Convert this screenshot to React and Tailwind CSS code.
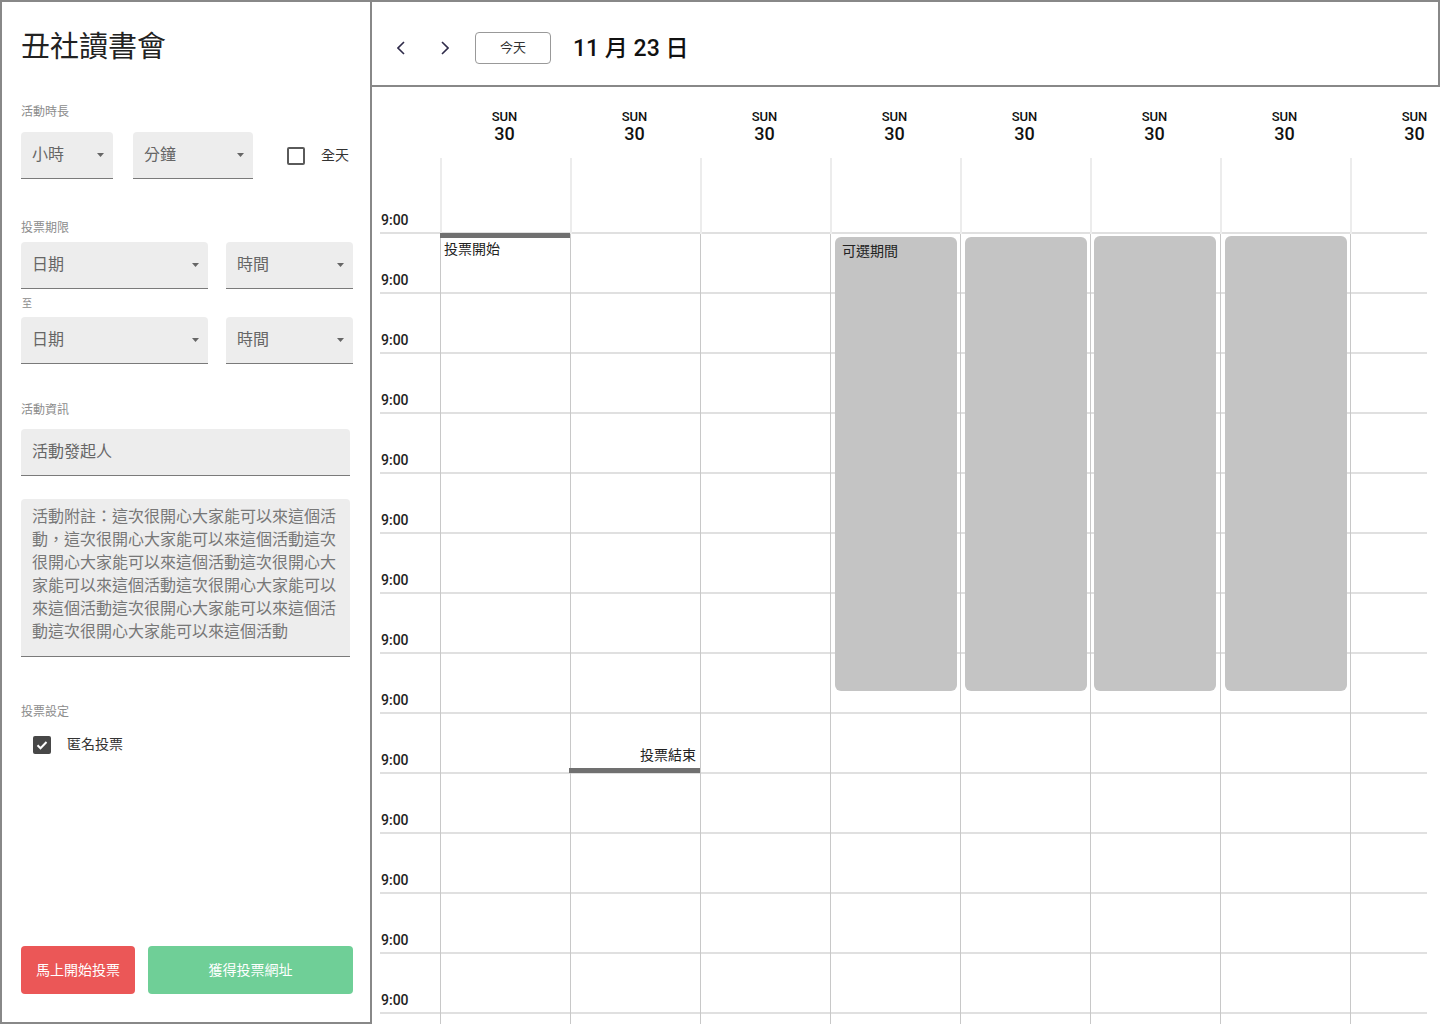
import React from 'react';

const days = Array.from({ length: 8 });
const rows = Array.from({ length: 13 });
const note =
  '活動附註：這次很開心大家能可以來這個活動，' + '這次很開心大家能可以來這個活動'.repeat(6);

function Label({ children, className = '' }) {
  return <div className={`text-[12px] leading-[16px] text-[#8c8c8c] ${className}`}>{children}</div>;
}

function Select({ label, className = '' }) {
  return (
    <div
      className={`flex h-[47px] shrink-0 items-center justify-between rounded-t-[4px] border-b border-[#7a7a7a] bg-[#ededed] pl-[11px] pr-[9px] ${className}`}
    >
      <span className="text-[16px] text-[#666]">{label}</span>
      <svg width="7" height="4" viewBox="0 0 7 4">
        <path d="M0 0h7L3.5 4z" fill="#666" />
      </svg>
    </div>
  );
}

function Row({ first, label }) {
  return (
    <div className={`flex w-[1047px] items-start border-b-2 border-[#e0e0e0] ${first ? 'h-[76px]' : 'h-[60px]'}`}>
      <div className="flex h-full w-[60px] shrink-0 items-end pb-[4px] pl-[1px] text-[14px] font-medium leading-[16px] text-[#222]">
        {label}
      </div>
      {days.map((_, i) => (
        <div
          key={i}
          className={`w-[130px] shrink-0 ${first ? 'h-[76px] border-l-2 border-[#ececec]' : 'h-[60px] border-l border-[#c8c8c8]'}`}
        />
      ))}
    </div>
  );
}

export default function App() {
  return (
    <div className="flex h-[1024px] w-[1440px] overflow-hidden bg-white font-['Roboto','Noto_Sans_CJK_TC',sans-serif]">
      {/* Sidebar form */}
      <aside className="flex h-full w-[372px] shrink-0 flex-col border-2 border-[#888] pb-[28px] pl-[19px] pt-[25px]">
        <h1 className="text-[29px] leading-[40px] text-[#222]">丑社讀書會</h1>

        <Label className="mt-[37px]">活動時長</Label>
        <div className="mt-[12px] flex items-center">
          <Select label="小時" className="w-[92px]" />
          <Select label="分鐘" className="ml-[20px] w-[120px]" />
          <div className="ml-[34px] h-[18px] w-[18px] rounded-[2px] border-2 border-[#5a5a5a]" />
          <span className="ml-[16px] text-[14px] text-[#333]">全天</span>
        </div>

        <Label className="mt-[41px]">投票期限</Label>
        <div className="mt-[6px] flex">
          <Select label="日期" className="w-[187px]" />
          <Select label="時間" className="ml-[18px] w-[127px]" />
        </div>
        <div className="mt-[8px] pl-[1px] text-[10px] leading-[14px] text-[#8c8c8c]">至</div>
        <div className="mt-[6px] flex">
          <Select label="日期" className="w-[187px]" />
          <Select label="時間" className="ml-[18px] w-[127px]" />
        </div>

        <Label className="mt-[38px]">活動資訊</Label>
        <div className="mt-[11px] flex h-[47px] w-[329px] items-center rounded-t-[4px] border-b border-[#7a7a7a] bg-[#ededed] pl-[11px] text-[16px] text-[#666]">
          活動發起人
        </div>
        <div className="mt-[23px] h-[158px] w-[329px] rounded-t-[4px] border-b border-[#7a7a7a] bg-[#ededed] pl-[11px] pr-[10px] pt-[6px] text-[16px] leading-[23px] text-[#777]">
          {note}
        </div>

        <Label className="mt-[47px]">投票設定</Label>
        <div className="mt-[14px] flex items-center">
          <div className="ml-[12px] flex h-[18px] w-[18px] items-center justify-center rounded-[2px] bg-[#474747]">
            <svg width="14" height="14" viewBox="0 0 14 14">
              <path d="M2.5 7.2l3 3L11.5 4" fill="none" stroke="#fff" strokeWidth="2" />
            </svg>
          </div>
          <span className="ml-[16px] text-[14px] text-[#333]">匿名投票</span>
        </div>

        <div className="mt-auto flex">
          <button className="h-[48px] w-[114px] rounded-[4px] bg-[#eb5757] text-[14px] text-white">馬上開始投票</button>
          <button className="ml-[13px] h-[48px] w-[205px] rounded-[4px] bg-[#6fcf97] text-[14px] text-white">獲得投票網址</button>
        </div>
      </aside>

      {/* Calendar */}
      <div className="flex min-w-0 flex-1 flex-col">
        <header className="flex h-[87px] shrink-0 items-center border-y-2 border-r-2 border-[#888] pl-[25px] pt-[9px]">
          <svg width="8" height="14" viewBox="0 0 8 14">
            <polyline points="7,1 1,7 7,13" fill="none" stroke="#2f2b4a" strokeWidth="1.6" />
          </svg>
          <svg width="8" height="14" viewBox="0 0 8 14" className="ml-[36px]">
            <polyline points="1,1 7,7 1,13" fill="none" stroke="#2f2b4a" strokeWidth="1.6" />
          </svg>
          <button className="ml-[26px] h-[32px] w-[76px] rounded-[4px] border border-[#999] text-[13px] text-[#333]">今天</button>
          <div className="ml-[22px] text-[23px] font-medium leading-none text-[#111]">11 月 23 日</div>
        </header>

        <div className="flex-1 overflow-hidden pl-[8px]">
          <div className="flex h-[71px] pt-[23px]">
            <div className="w-[60px] shrink-0" />
            {days.map((_, i) => (
              <div key={i} className="flex w-[130px] shrink-0 flex-col items-center pr-[1px] text-[#111]">
                <span className="text-[13px] font-medium leading-[14px]">SUN</span>
                <span className="text-[18px] font-medium leading-[20px]">30</span>
              </div>
            ))}
          </div>

          <div className="relative">
            <Row first label="9:00" />
            {rows.map((_, i) => (
              <Row key={i} label="9:00" />
            ))}
            <Row />

            {/* vote start */}
            <div className="absolute left-[60px] top-[75px] w-[130px]">
              <div className="h-[5px] bg-[#707070]" />
              <div className="pl-[4px] pt-[2px] text-[14px] leading-[18px] text-[#222]">投票開始</div>
            </div>

            {/* vote end */}
            <div className="absolute left-[189px] top-[588px] w-[131px]">
              <div className="pr-[4px] text-right text-[14px] leading-[18px] text-[#222]">投票結束</div>
              <div className="mt-[4px] h-[5px] bg-[#707070]" />
            </div>

            {/* selectable periods */}
            <div className="absolute left-[455px] top-[79px] h-[454px] w-[122px] rounded-[6px] bg-[#c4c4c4] pl-[7px] pt-[5px] text-[14px] leading-[18px] text-[#222]">
              可選期間
            </div>
            <div className="absolute left-[585px] top-[79px] h-[454px] w-[122px] rounded-[6px] bg-[#c4c4c4]" />
            <div className="absolute left-[714px] top-[78px] h-[455px] w-[122px] rounded-[6px] bg-[#c4c4c4]" />
            <div className="absolute left-[845px] top-[78px] h-[455px] w-[122px] rounded-[6px] bg-[#c4c4c4]" />
          </div>
        </div>
      </div>
    </div>
  );
}
